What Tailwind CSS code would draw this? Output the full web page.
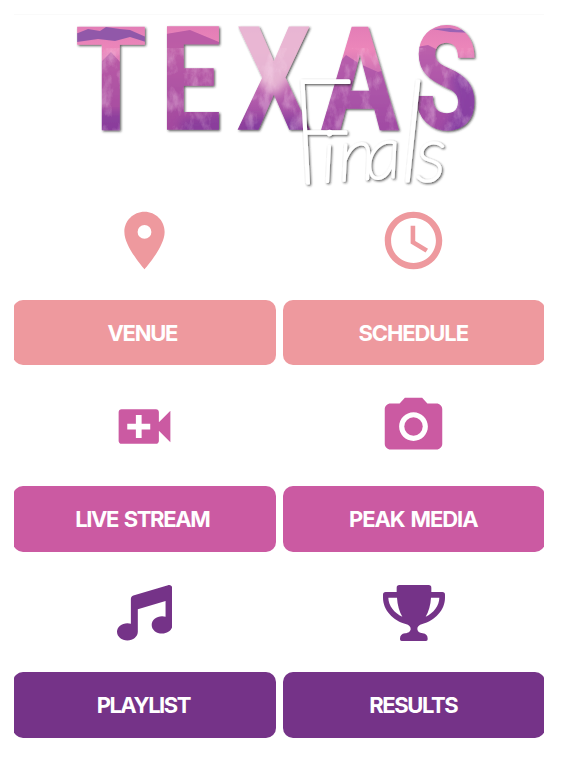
<!DOCTYPE html>
<html lang="en">
  <head>
    <meta charset="UTF-8" />
    <meta name="viewport" content="width=device-width, initial-scale=1.0" />
    <script src="https://cdn.jsdelivr.net/npm/@tailwindcss/browser@4"></script>
    <title>Texas Finals</title>
  </head>

  <body class="bg-white">
    <main class="w-[576px] h-[768px] overflow-hidden pt-[14px] pl-[14px] pr-8">
      <!-- logo -->
      <header class="h-[192px] border-t border-neutral-50">
        <svg class="block w-[530px] h-[191px]" viewBox="14 15 530 191" role="img" aria-label="Texas Finals">
          <defs>
            <linearGradient id="sky" x1="0" y1="0" x2="0" y2="1">
              <stop offset="0" stop-color="#d873b2" />
              <stop offset=".35" stop-color="#ec86ba" />
              <stop offset=".6" stop-color="#c069b1" />
              <stop offset="1" stop-color="#8c3a9c" />
            </linearGradient>
            <filter id="rock" x="0" y="0" width="100%" height="100%">
              <feTurbulence type="fractalNoise" baseFrequency=".08 .045" numOctaves="5" seed="8" />
              <feColorMatrix values="0 0 0 0 1  0 0 0 0 .78  0 0 0 0 .9  3.4 0 0 0 -1.6" />
            </filter>
            <filter id="soft"><feGaussianBlur stdDeviation="5" /></filter>
            <!-- stretched back so the scene is not squeezed with the letters -->
            <pattern id="mountains" patternUnits="userSpaceOnUse" width="576" height="140" patternTransform="scale(1.25 1)">
              <rect width="576" height="140" fill="url(#sky)" />
              <path d="M60 36L78 33L88 29L100 31L106 27L120 29L130 30L146 37L146 42L130 37L115 41L98 39L77 42z" fill="#9159a9" />
              <path d="M77 74L100 63L111 52L121 63L140 60L166 34L190 30L219 42L235 70L250 140H60V72z" fill="#a84b9f" opacity=".7" />
              <path d="M228 15H318L306 60L275 96L240 66z" fill="#e9bbd6" opacity=".9" filter="url(#soft)" />
              <path d="M320 76L336 66L346 55L360 64L378 72L398 66L417 47L428 45L442 52L462 72L480 82V140H318z" fill="#a54fa6" opacity=".7" />
              <path d="M432 29L450 28L458 30L474 28V33L450 32z" fill="#9a63b4" />
              <path d="M450 75L480 62V140H440L456 105z" fill="#7636a0" opacity=".6" filter="url(#soft)" />
              <path d="M180 120L230 110V140H180zM76 112H145V140H76zM235 118H300V140H235z" fill="#713199" opacity=".5" filter="url(#soft)" />
              <rect y="48" width="576" height="92" filter="url(#rock)" opacity=".3" />
            </pattern>
            <filter id="shade" x="-10%" y="-10%" width="120%" height="125%">
              <feDropShadow dx="1.2" dy="1.2" stdDeviation=".9" flood-color="#222" flood-opacity=".75" />
            </filter>
          </defs>

          <g filter="url(#shade)">
            <text transform="scale(.8 1)" x="94.5 201 297 402 517" y="128.5" font-family="Roboto, sans-serif" font-size="143" font-weight="700" fill="url(#mountains)" stroke="url(#mountains)" stroke-width="1.5">T<tspan textLength="75" lengthAdjust="spacingAndGlyphs">E</tspan>XA<tspan textLength="80" lengthAdjust="spacingAndGlyphs">S</tspan></text>
          </g>
          <g filter="url(#shade)" fill="#fff" stroke="#fff" stroke-linejoin="round" font-family="Lato, sans-serif" font-style="italic" font-weight="100">
            <text transform="translate(298 183) skewX(9) scale(.86 1)" font-size="146" stroke-width="3">F</text>
            <text transform="translate(323 182) rotate(-4)" x="0 17 44" font-size="72" stroke-width="2.6">ina</text>
            <text transform="translate(399 181) skewX(1)" font-size="139" stroke-width="3">l</text>
            <text transform="translate(416 181)" font-size="78" stroke-width="2.6">s</text>
          </g>
        </svg>
      </header>

      <!-- links -->
      <div class="overflow-hidden">
        <div class="-mx-px grid grid-cols-2 gap-x-[7px] gap-y-[27px] font-['Inter','Liberation_Sans',sans-serif] text-[22px] leading-none font-bold text-white">
          <div class="flex flex-col items-center gap-[24.75px]">
            <svg class="size-[69px] text-[#ee999e]" viewBox="0 0 24 24" fill="currentColor">
              <path d="M12 2C8.13 2 5 5.13 5 9c0 5.25 7 13 7 13s7-7.75 7-13c0-3.87-3.13-7-7-7zm0 9.4a2.4 2.4 0 1 1 0-4.8 2.4 2.4 0 0 1 0 4.8z" />
            </svg>
            <a href="#" class="flex h-[65.5px] w-full items-center justify-center rounded-[10px] bg-[#ee999e] pr-1 tracking-[-1.3px]">VENUE</a>
          </div>
          <div class="flex flex-col items-center gap-[24.75px]">
            <svg class="size-[69px] text-[#ee999e]" viewBox="0 0 24 24" fill="currentColor">
              <path d="M11.99 2C6.47 2 2 6.48 2 12s4.47 10 9.99 10C17.52 22 22 17.52 22 12S17.52 2 11.99 2zM12 19.8c-4.31 0-7.8-3.49-7.8-7.8S7.69 4.2 12 4.2s7.8 3.49 7.8 7.8-3.49 7.8-7.8 7.8z" />
              <path d="M12.6 6.9H11v6.1l5.2 3.2.85-1.35-4.45-2.65z" />
            </svg>
            <a href="#" class="flex h-[65.5px] w-full items-center justify-center rounded-[10px] bg-[#ee999e] pr-px tracking-[-1.1px]">SCHEDULE</a>
          </div>

          <div class="flex flex-col items-center gap-[24.75px]">
            <svg class="size-[69px] text-[#cb5aa2]" viewBox="0 0 24 24" fill="currentColor">
              <path d="M17 10.5V7c0-.55-.45-1-1-1H4c-.55 0-1 .45-1 1v10c0 .55.45 1 1 1h12c.55 0 1-.45 1-1v-3.5l4 4v-11l-4 4zM14 13h-3v3H9v-3H6v-2h3V8h2v3h3v2z" />
            </svg>
            <a href="#" class="flex h-[65.5px] w-full items-center justify-center rounded-[10px] bg-[#cb5aa2] pr-1 tracking-[-1.4px] [word-spacing:2px]">LIVE STREAM</a>
          </div>
          <div class="flex flex-col items-center gap-[24.75px]">
            <svg class="size-[69px] text-[#cb5aa2]" viewBox="0 0 24 24" fill="currentColor">
              <circle cx="12" cy="12" r="3.2" />
              <path d="M9 2L7.17 4H4c-1.1 0-2 .9-2 2v12c0 1.1.9 2 2 2h16c1.1 0 2-.9 2-2V6c0-1.1-.9-2-2-2h-3.17L15 2H9zm3 15c-2.76 0-5-2.24-5-5s2.24-5 5-5 5 2.24 5 5-2.24 5-5 5z" />
            </svg>
            <a href="#" class="flex h-[65.5px] w-full items-center justify-center rounded-[10px] bg-[#cb5aa2] pr-px tracking-[-1.1px] [word-spacing:2px]">PEAK MEDIA</a>
          </div>

          <div class="flex flex-col items-center gap-[24.75px]">
            <div class="flex h-[69px] items-center">
              <svg class="size-[55.5px] text-[#753388]" viewBox="0 0 512 512" fill="currentColor">
                <path d="M499.1 6.3c8.1 6 12.9 15.6 12.9 25.7v72V368c0 44.2-43 80-96 80s-96-35.8-96-80s43-80 96-80c11.2 0 22 1.6 32 4.6V147L192 223.8V432c0 44.2-43 80-96 80s-96-35.8-96-80s43-80 96-80c11.2 0 22 1.6 32 4.6V200 128c0-14.1 9.3-26.6 22.8-30.7l320-96c9.7-2.9 20.2-1.1 28.3 5z" />
              </svg>
            </div>
            <a href="#" class="flex h-[65.5px] w-full items-center justify-center rounded-[10px] bg-[#753388] pr-0.5 tracking-[-1.5px]">PLAYLIST</a>
          </div>
          <div class="flex flex-col items-center gap-[24.75px]">
            <div class="flex h-[69px] items-center">
              <svg class="w-[62px] h-[56px] text-[#753388]" viewBox="0 0 186 168" fill="currentColor">
                <path fill-rule="evenodd" d="M49 0H137Q145 0 145 8V21H178Q186 21 186 29V38C186 76 155 106 118 117C108 120 103 125 103 132C103 139 109 144 119 145Q134 147 134 161V163Q134 168 129 168H56Q51 168 51 163V161Q51 147 66 145C76 144 83 139 83 132C83 125 78 120 68 117C31 106 0 76 0 38V29Q0 21 8 21H41V8Q41 0 49 0ZM16 38H42C43 59 49 80 58 95C34 84 16 61 16 38ZM144 38H169C169 61 152 84 128 95C137 80 143 59 144 38Z" />
              </svg>
            </div>
            <a href="#" class="flex h-[65.5px] w-full items-center justify-center rounded-[10px] bg-[#753388] pr-px tracking-[-1.4px]">RESULTS</a>
          </div>
        </div>
      </div>
    </main>
  </body>
</html>
